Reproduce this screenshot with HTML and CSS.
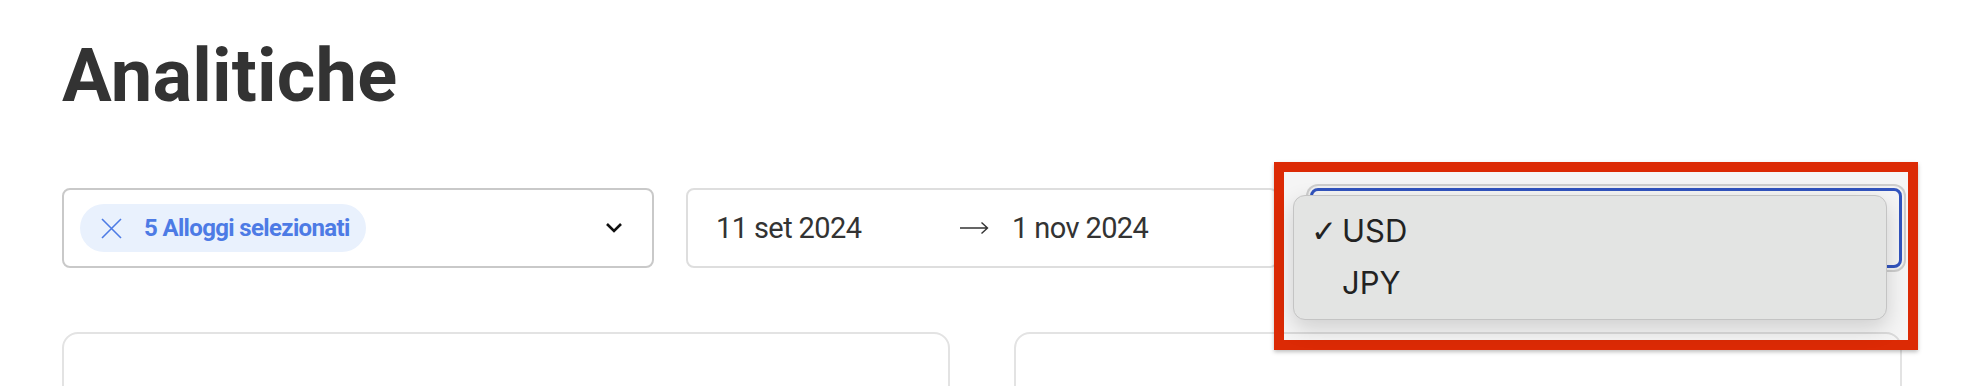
FILE: index.html
```html
<!DOCTYPE html>
<html lang="it">
<head>
<meta charset="utf-8">
<title>Analitiche</title>
<link rel="stylesheet" href="styles.css">
</head>
<body>
<main class="page">
  <h1 class="title">Analitiche</h1>
  <div class="filters">
    <div class="field field-multi">
      <span class="chip">
        <svg class="chip-x" width="21" height="21" viewBox="0 0 21 21" aria-hidden="true"><path d="M1 1 L20 20 M20 1 L1 20" fill="none" stroke="currentColor" stroke-width="1.6"/></svg>
        <span class="chip-label">5 Alloggi selezionati</span>
      </span>
      <svg class="chevron" width="24" height="24" viewBox="0 0 24 24" aria-hidden="true"><path d="M5 8 L12 15 L19 8" fill="none" stroke="#111" stroke-width="2.6"/></svg>
    </div>
    <div class="field field-date">
      <span class="date date-from">11 set 2024</span>
      <svg class="arrow" width="30" height="14" viewBox="0 0 30 14" aria-hidden="true"><path d="M1 7 H28.5 M22.5 1.5 L28.5 7 L22.5 12.5" fill="none" stroke="#333" stroke-width="1.4"/></svg>
      <span class="date">1 nov 2024</span>
    </div>
    <div class="field field-select">
      <div class="menu">
        <div class="menu-item"><span class="check">✓</span>USD</div>
        <div class="menu-item"><span class="check"></span>JPY</div>
      </div>
    </div>
  </div>
  <div class="cards">
    <div class="card"></div>
    <div class="card"></div>
  </div>
</main>
<div class="annotation"></div>
</body>
</html>
```

FILE: styles.css
```css
body {
  margin: 0;
  background: #ffffff;
  color: #333333;
  font-family: Roboto, "Noto Sans", sans-serif;
  overflow: hidden;
}

.page {
  padding: 36px 66px 0 62px;
}

.title {
  margin: 0;
  font-family: Roboto, sans-serif;
  font-weight: 700;
  font-size: 74px;
  line-height: 80px;
  letter-spacing: 0.2px;
  color: #333333;
}

.filters {
  display: grid;
  grid-template-columns: repeat(3, 1fr);
  gap: 32px;
  margin-top: 72px;
}

.field {
  box-sizing: border-box;
  height: 80px;
  border: 2px solid #c9c9c9;
  border-radius: 8px;
  background: #ffffff;
  display: flex;
  align-items: center;
  padding: 0 16px;
}

.chip {
  display: inline-flex;
  align-items: center;
  gap: 22px;
  height: 48px;
  padding: 0 16px 0 21px;
  border-radius: 24px;
  background: #e9f1fd;
  color: #4d7be5;
}

.chip-x {
  display: block;
  flex: none;
}

.chip-label {
  font-weight: 700;
  font-size: 24px;
  letter-spacing: -0.65px;
  white-space: nowrap;
}

.chevron {
  display: block;
  margin-left: auto;
  margin-right: 10px;
}

.field-date {
  border-color: #dedede;
  padding-left: 28px;
}

.date {
  font-size: 29px;
  letter-spacing: -0.6px;
  color: #333333;
  white-space: nowrap;
}

.date-from {
  width: 243px;
}

.arrow {
  display: block;
  flex: none;
  margin-right: 23px;
}

.field-select {
  position: relative;
  border: 3px solid #3558c6;
  box-shadow: 0 0 0 2px #fbfbfb, 0 0 0 4px #d6d6d6;
}

.menu {
  position: absolute;
  z-index: 10;
  left: -20px;
  top: 4px;
  width: 594px;
  height: 125px;
  box-sizing: border-box;
  padding: 9px 0 0;
  background: #e3e4e3;
  border: 1px solid #c4c4c4;
  border-radius: 12px;
  box-shadow: 0 8px 22px rgba(0, 0, 0, 0.16);
  font-family: Inter, Roboto, sans-serif;
  font-size: 31px;
  line-height: 51px;
  color: #222222;
}

.menu-item {
  display: flex;
  align-items: baseline;
}

.check {
  display: inline-block;
  box-sizing: border-box;
  width: 48px;
  padding-right: 5px;
  text-align: right;
  font-family: "DejaVu Sans", sans-serif;
  font-size: 31px;
}

.cards {
  display: grid;
  grid-template-columns: 1fr 1fr;
  gap: 64px;
  margin-top: 64px;
}

.card {
  height: 240px;
  border: 2px solid #e3e3e3;
  border-radius: 16px;
}

.annotation {
  position: absolute;
  z-index: 5;
  left: 1274px;
  top: 162px;
  width: 644px;
  height: 188px;
  box-sizing: border-box;
  border: 10px solid #dc2a05;
  background: rgba(0, 0, 0, 0.04);
  box-shadow: 0 2px 4px rgba(0, 0, 0, 0.25);
}
```
